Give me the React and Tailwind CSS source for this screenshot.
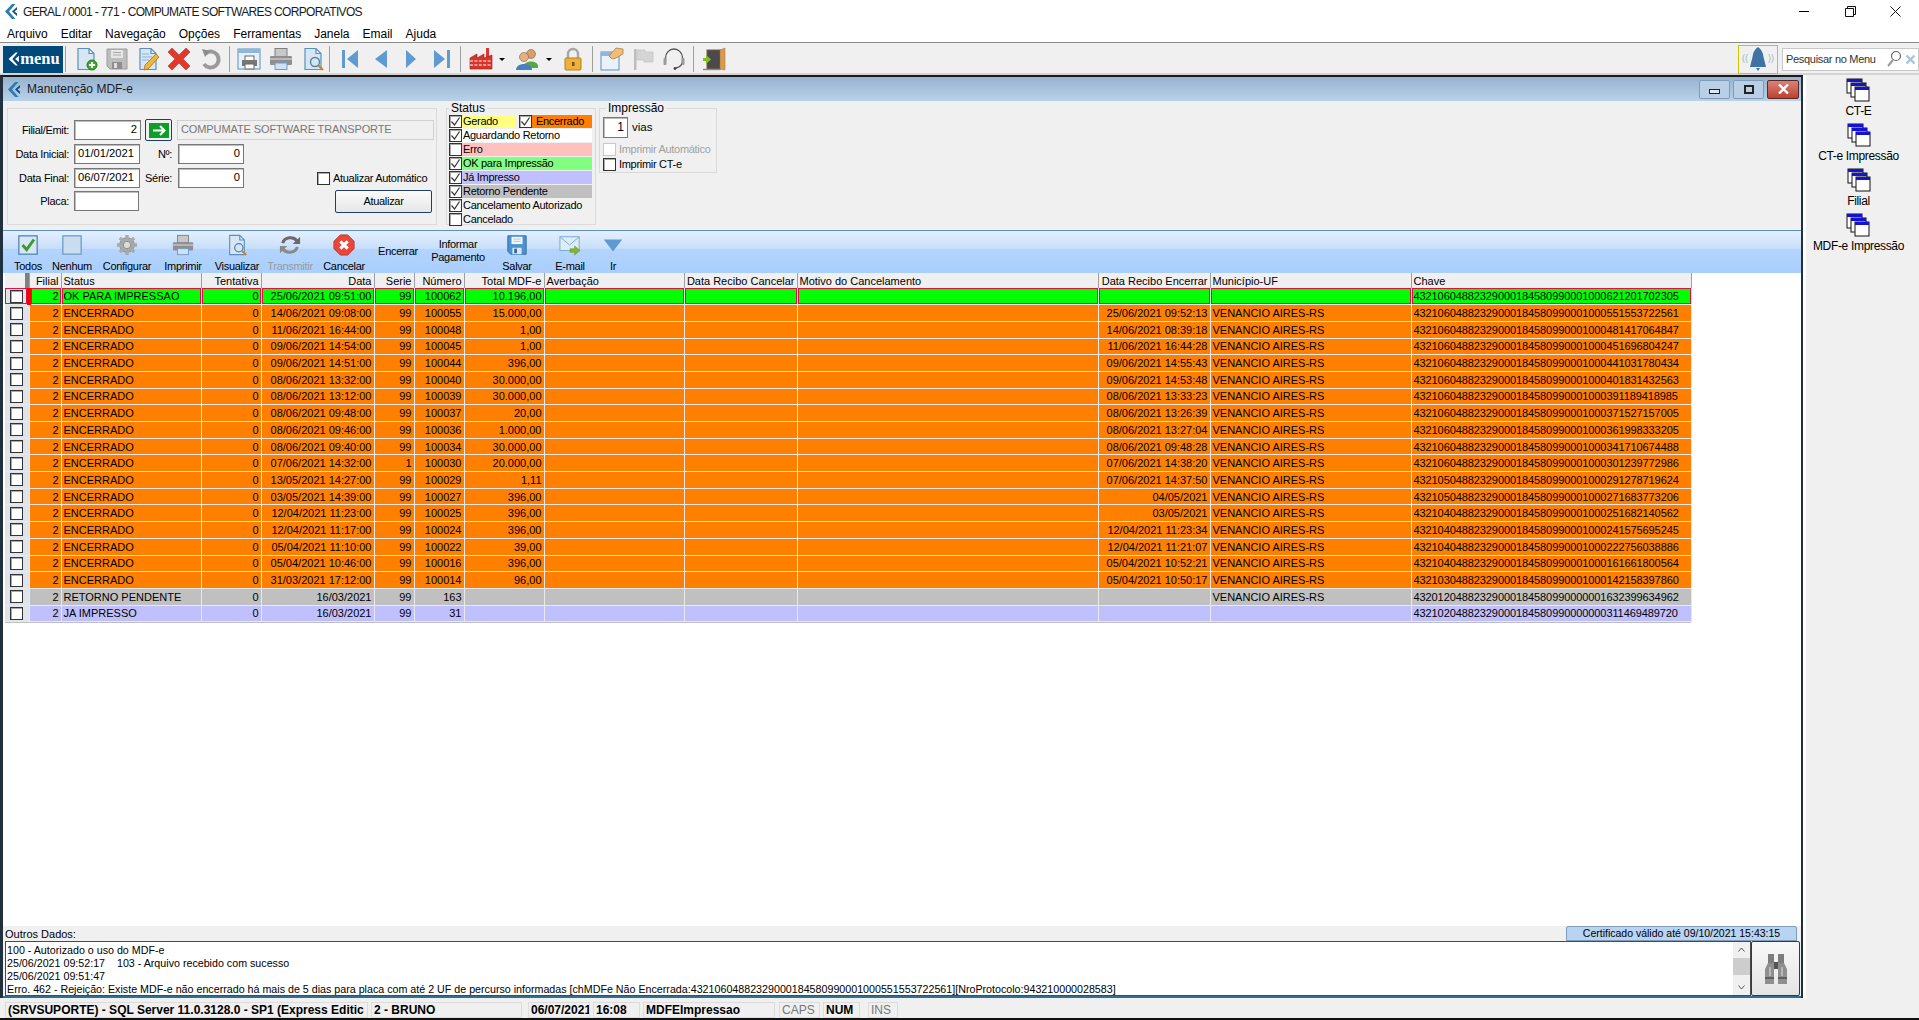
import React from "react";

const menus = ["Arquivo", "Editar", "Navegação", "Opções", "Ferramentas", "Janela", "Email", "Ajuda"];

const PRE = "432106048823290001845809900010";

const rows = [
  { tone: "ok", status: "OK PARA IMPRESSAO", data: "25/06/2021 09:51:00", serie: "99", num: "100062", total: "10.196,00", enc: "", mun: "", chave: "43210604882329000184580990001000621201702305" },
  { status: "ENCERRADO", data: "14/06/2021 09:08:00", serie: "99", num: "100055", total: "15.000,00", enc: "25/06/2021 09:52:13", chave: PRE + "00551553722561" },
  { status: "ENCERRADO", data: "11/06/2021 16:44:00", serie: "99", num: "100048", total: "1,00", enc: "14/06/2021 08:39:18", chave: PRE + "00481417064847" },
  { status: "ENCERRADO", data: "09/06/2021 14:54:00", serie: "99", num: "100045", total: "1,00", enc: "11/06/2021 16:44:28", chave: PRE + "00451696804247" },
  { status: "ENCERRADO", data: "09/06/2021 14:51:00", serie: "99", num: "100044", total: "396,00", enc: "09/06/2021 14:55:43", chave: PRE + "00441031780434" },
  { status: "ENCERRADO", data: "08/06/2021 13:32:00", serie: "99", num: "100040", total: "30.000,00", enc: "09/06/2021 14:53:48", chave: PRE + "00401831432563" },
  { status: "ENCERRADO", data: "08/06/2021 13:12:00", serie: "99", num: "100039", total: "30.000,00", enc: "08/06/2021 13:33:23", chave: PRE + "00391189418985" },
  { status: "ENCERRADO", data: "08/06/2021 09:48:00", serie: "99", num: "100037", total: "20,00", enc: "08/06/2021 13:26:39", chave: PRE + "00371527157005" },
  { status: "ENCERRADO", data: "08/06/2021 09:46:00", serie: "99", num: "100036", total: "1.000,00", enc: "08/06/2021 13:27:04", chave: PRE + "00361998333205" },
  { status: "ENCERRADO", data: "08/06/2021 09:40:00", serie: "99", num: "100034", total: "30.000,00", enc: "08/06/2021 09:48:28", chave: PRE + "00341710674488" },
  { status: "ENCERRADO", data: "07/06/2021 14:32:00", serie: "1", num: "100030", total: "20.000,00", enc: "07/06/2021 14:38:20", chave: PRE + "00301239772986" },
  { status: "ENCERRADO", data: "13/05/2021 14:27:00", serie: "99", num: "100029", total: "1,11", enc: "07/06/2021 14:37:50", chave: "43210504882329000184580990001000291278719624" },
  { status: "ENCERRADO", data: "03/05/2021 14:39:00", serie: "99", num: "100027", total: "396,00", enc: "04/05/2021", chave: "43210504882329000184580990001000271683773206" },
  { status: "ENCERRADO", data: "12/04/2021 11:23:00", serie: "99", num: "100025", total: "396,00", enc: "03/05/2021", chave: "43210404882329000184580990001000251682140562" },
  { status: "ENCERRADO", data: "12/04/2021 11:17:00", serie: "99", num: "100024", total: "396,00", enc: "12/04/2021 11:23:34", chave: "43210404882329000184580990001000241575695245" },
  { status: "ENCERRADO", data: "05/04/2021 11:10:00", serie: "99", num: "100022", total: "39,00", enc: "12/04/2021 11:21:07", chave: "43210404882329000184580990001000222756038886" },
  { status: "ENCERRADO", data: "05/04/2021 10:46:00", serie: "99", num: "100016", total: "396,00", enc: "05/04/2021 10:52:21", chave: "43210404882329000184580990001000161661800564" },
  { status: "ENCERRADO", data: "31/03/2021 17:12:00", serie: "99", num: "100014", total: "96,00", enc: "05/04/2021 10:50:17", chave: "43210304882329000184580990001000142158397860" },
  { tone: "gray", status: "RETORNO PENDENTE", data: "16/03/2021", serie: "99", num: "163", total: "", enc: "", mun: "VENANCIO AIRES-RS", chave: "43201204882329000184580990000001632399634962" },
  { tone: "lilac", status: "JA IMPRESSO", data: "16/03/2021", serie: "99", num: "31", total: "", enc: "", mun: "", chave: "43210204882329000184580990000000311469489720" },
];

const TONES = { ok: "bg-[#00ff00]", gray: "bg-[#c0c0c0]", lilac: "bg-[#c0c0ff]" };

const COLS = [24, 32, 140, 60, 113, 40, 50, 80, 140, 113, 301, 112, 201, 280];

const HEADERS = [
  ["", ""], ["Filial", "r"], ["Status", "l"], ["Tentativa", "r"], ["Data", "r"], ["Serie", "r"], ["Número", "r"],
  ["Total MDF-e", "r"], ["Averbação", "l"], ["Data Recibo Cancelar", "r"], ["Motivo do Cancelamento", "l"],
  ["Data Recibo Encerrar", "r"], ["Município-UF", "l"], ["Chave", "l"],
];

function Svg({ w = 24, h = 24, box = "0 0 24 24", children, className = "" }) {
  return (
    <svg width={w} height={h} viewBox={box} className={`shrink-0 ${className}`}>
      {children}
    </svg>
  );
}

function Chevron({ w = 12, h = 15 }) {
  return (
    <Svg w={w} h={h} box="0 0 12 15">
      <path d="M7 0 L0 7.5 L7 15 H10.5 L4 7.5 L10.5 0 Z" fill="#2a7eb0" />
      <path d="M12 3 L7 7.5 L12 12 V9.5 L9.5 7.5 L12 5.5 Z" fill="#0d4f7c" />
    </Svg>
  );
}

const Page = ({ fill = "#d6e6f5", stroke = "#5b8fc0" }) => (
  <path d="M4 1.5 H15 L20 6.5 V22.5 H4 Z M15 1.5 V6.5 H20" fill={fill} stroke={stroke} strokeWidth="1.2" />
);

const icons = {
  newDoc: (
    <>
      <Page />
      <circle cx="18" cy="18" r="5" fill="#3ea832" stroke="#2a7d22" />
      <path d="M18 15 V21 M15 18 H21" stroke="#fff" strokeWidth="1.8" />
    </>
  ),
  save: (
    <>
      <path d="M2 2 H22 V22 H5 L2 19 Z" fill="#bdbdbd" stroke="#9c9c9c" />
      <rect x="6" y="3" width="12" height="8" fill="#e6e6e6" />
      <path d="M8 5.5 H16 M8 8 H16" stroke="#aaa" />
      <rect x="7" y="15" width="10" height="7" fill="#8e8e8e" />
      <rect x="9" y="16" width="3" height="5" fill="#dedede" />
    </>
  ),
  edit: (
    <>
      <Page />
      <path d="M6 7 H13 M6 10 H16 M6 13 H13" stroke="#8fb3d6" />
      <path d="M20 7 L23 10 L12 22 L8 23 L9 18 Z" fill="#f2b53c" stroke="#a8741a" strokeWidth="0.8" />
    </>
  ),
  del: <path d="M5 1 L12 8 L19 1 L23 5 L16 12 L23 19 L19 23 L12 16 L5 23 L1 19 L8 12 L1 5 Z" fill="#e0392c" stroke="#c4281d" strokeWidth="0.6" />,
  undo: (
    <>
      <path d="M8 6 A8 8 0 1 1 6 17" fill="none" stroke="#9a9a9a" strokeWidth="4" />
      <path d="M4 2 L12 4 L7 10 Z" fill="#8c8c8c" />
    </>
  ),
  preview: (
    <>
      <rect x="1" y="2" width="22" height="20" fill="#e8f1fa" stroke="#5b8fc0" />
      <rect x="1" y="2" width="22" height="4" fill="#8db7dc" />
      <rect x="8" y="9" width="9" height="5" fill="#fff" stroke="#666" />
      <rect x="5" y="13" width="15" height="6" fill="#777" />
      <rect x="8" y="17" width="9" height="5" fill="#fff" stroke="#666" />
    </>
  ),
  print: (
    <>
      <rect x="6" y="1.5" width="12" height="8" fill="#c8c8c8" stroke="#7f7f7f" />
      <rect x="1" y="9" width="22" height="9" rx="1" fill="#8f8f8f" />
      <rect x="1" y="11" width="22" height="2" fill="#b9b9b9" />
      <rect x="6" y="16" width="12" height="6.5" fill="#cfe2f5" stroke="#6f9cc7" />
    </>
  ),
  searchDoc: (
    <>
      <Page />
      <circle cx="14" cy="15" r="4.5" fill="#cfe8f7" stroke="#5f7f99" strokeWidth="1.4" />
      <path d="M17.5 18.5 L22 23" stroke="#b58a3a" strokeWidth="2.2" />
    </>
  ),
  first: (
    <>
      <rect x="4" y="3" width="3" height="18" fill="#5f9bd0" />
      <path d="M20 3 V21 L9 12 Z" fill="#5f9bd0" />
    </>
  ),
  prev: <path d="M18 3 V21 L6 12 Z" fill="#5f9bd0" />,
  next: <path d="M7 3 V21 L17 12 Z" fill="#5f9bd0" />,
  last: (
    <>
      <path d="M4 3 V21 L15 12 Z" fill="#5f9bd0" />
      <rect x="17" y="3" width="3" height="18" fill="#5f9bd0" />
    </>
  ),
  factory: (
    <>
      <rect x="17" y="1" width="3" height="10" fill="#d33" />
      <path d="M1 11 L8 7 V11 L15 7 V11 L23 8 V22 H1 Z" fill="#d8342a" stroke="#9c1d15" strokeWidth="0.6" />
      <path d="M1 14 H23 M1 18 H23" stroke="#fff" strokeWidth="1" strokeDasharray="3 1.4" />
    </>
  ),
  users: (
    <>
      <circle cx="16" cy="7" r="4.5" fill="#d7a06c" stroke="#8a5d34" strokeWidth="0.6" />
      <path d="M9 19 C9 13 23 13 23 19 V21 H9 Z" fill="#58a64a" />
      <circle cx="9" cy="10" r="4.5" fill="#e3b183" stroke="#8a5d34" strokeWidth="0.6" />
      <path d="M1 23 C1 15 17 15 17 23 Z" fill="#4a7fc4" />
    </>
  ),
  lock: (
    <>
      <path d="M7 12 V7 A5 5 0 0 1 17 7 V12" fill="none" stroke="#a7a7a7" strokeWidth="2.4" />
      <rect x="4" y="11" width="16" height="12" rx="1" fill="#eeb13c" stroke="#b67f1c" />
      <rect x="11" y="15" width="2.5" height="4" fill="#7a5210" />
    </>
  ),
  note: (
    <>
      <rect x="1" y="5" width="18" height="18" fill="#eaf2fb" stroke="#5b8fc0" />
      <rect x="1" y="5" width="18" height="4" fill="#8db7dc" />
      <path d="M9 9 L16 1 L23 2 L23 7 L16 11 L12 12 Z" fill="#f0bd7a" stroke="#b0762d" strokeWidth="0.7" />
    </>
  ),
  flag: (
    <>
      <rect x="2" y="2" width="2.5" height="21" fill="#bdbdbd" />
      <path d="M5 3 H13 V5 H21 V15 H12 V13 H5 Z" fill="#d5d5d5" stroke="#bdbdbd" strokeWidth="0.6" />
    </>
  ),
  headset: (
    <>
      <path d="M3.5 14 V11 A8.5 9 0 0 1 20.5 11 V14 C20.5 18 18 20 14 21" fill="none" stroke="#555" strokeWidth="1.3" />
      <rect x="1.5" y="11" width="3" height="7" rx="1" fill="#9a9a9a" />
      <rect x="19.5" y="11" width="3" height="7" rx="1" fill="#9a9a9a" />
      <circle cx="13" cy="21.5" r="1.4" fill="#444" />
    </>
  ),
  door: (
    <>
      <rect x="5" y="3" width="14" height="19" fill="#4a4a4a" stroke="#7b5b32" />
      <path d="M18 3 L23 1 V23 L18 22 Z" fill="#d89a52" stroke="#a76f2f" strokeWidth="0.5" />
      <path d="M1 22.5 H18" stroke="#888" strokeWidth="1.4" />
      <path d="M1 11 H4 V8 L9 12.5 L4 17 V14 H1 Z" fill="#7ec21f" />
    </>
  ),
  check: (
    <>
      <rect x="2" y="2" width="20" height="20" fill="#d7e6f5" stroke="#4f86b8" strokeWidth="1.4" />
      <path d="M6 12 L10.5 17 L18.5 6" fill="none" stroke="#3f9a2a" strokeWidth="3.2" />
    </>
  ),
  blank: <rect x="2" y="2" width="20" height="20" fill="#c9dcf0" stroke="#6f9cc7" strokeWidth="1.4" />,
  gear: (
    <>
      <circle cx="12" cy="12" r="8" fill="#a9a9a9" stroke="#8a8a8a" />
      <path d="M12 1 V23 M1 12 H23 M4.2 4.2 L19.8 19.8 M19.8 4.2 L4.2 19.8" stroke="#a9a9a9" strokeWidth="3.6" />
      <circle cx="12" cy="12" r="4" fill="#dcdcdc" stroke="#8a8a8a" />
    </>
  ),
  sync: (
    <>
      <path d="M4 10 C6 3 16 2 20 8" fill="none" stroke="#6a6a6a" strokeWidth="3.4" />
      <path d="M23 3 V11 H15 Z" fill="#6a6a6a" />
      <path d="M20 14 C18 21 8 22 4 16" fill="none" stroke="#8a8a8a" strokeWidth="3.4" />
      <path d="M1 21 V13 H9 Z" fill="#8a8a8a" />
    </>
  ),
  cancel: (
    <>
      <path d="M8 1 H16 L23 8 V16 L16 23 H8 L1 16 V8 Z" fill="#e8483c" stroke="#c7322a" />
      <path d="M8 8 L16 16 M16 8 L8 16" stroke="#fff" strokeWidth="3.4" />
    </>
  ),
  floppy: (
    <>
      <path d="M2 2 H22 V22 H5 L2 19 Z" fill="#4b93d2" stroke="#2c6ba3" />
      <rect x="6" y="3" width="12" height="8" fill="#f4f8fc" />
      <path d="M8 5.5 H16 M8 8 H16" stroke="#a9c3dc" />
      <rect x="7" y="15" width="10" height="7" fill="#dfe7ee" />
      <rect x="9" y="16" width="3" height="5" fill="#2c6ba3" />
    </>
  ),
  mail: (
    <>
      <rect x="1" y="3" width="21" height="15" fill="#dcecf8" stroke="#79a7cc" />
      <path d="M1 3 L11.5 12 L22 3" fill="none" stroke="#79a7cc" />
      <path d="M12 16 H17 V13 L23 18 L17 23 V20 H12 Z" fill="#83b62c" stroke="#5f8c1c" strokeWidth="0.5" />
    </>
  ),
  down: <path d="M2 6 H22 L12 19 Z" fill="#5f9bd0" />,
  stack: (
    <>
      <rect x="1" y="1" width="15" height="14" fill="#fff" stroke="#111" />
      <rect x="1" y="1" width="15" height="3" fill="#1414d0" />
      <rect x="5" y="5" width="15" height="14" fill="#fff" stroke="#111" />
      <rect x="5" y="5" width="15" height="3" fill="#1414d0" />
      <rect x="9" y="9" width="14" height="14" fill="#fff" stroke="#111" />
      <rect x="9" y="9" width="14" height="3" fill="#1414d0" />
    </>
  ),
};

function Icon({ name, size = 24 }) {
  return <Svg w={size} h={size}>{icons[name]}</Svg>;
}

function Binoculars() {
  return (
    <Svg w={24} h={30} box="0 0 24 30">
      <rect x="4" y="0" width="6" height="9" fill="#7d7d7d" />
      <rect x="14" y="0" width="6" height="9" fill="#7d7d7d" />
      <path d="M4 9 H10 V30 H1 V15 Z M14 9 H20 L23 15 V30 H14 Z" fill="#8f8f8f" />
      <rect x="10" y="8" width="4" height="7" fill="#555" />
      <path d="M1 24 H10 M14 24 H23" stroke="#4f4f4f" strokeWidth="1.4" />
      <path d="M6 13 V22 M18 13 V22" stroke="#c8c8c8" strokeWidth="1.4" />
    </Svg>
  );
}

const Sep = ({ className = "" }) => <div className={`h-[26px] w-px bg-[#a0a0a0] ${className}`} />;

const Caret = ({ className = "" }) => <span className={`h-0 w-0 border-x-[3px] border-t-[3px] border-x-transparent border-t-black ${className}`} />;

const inputCls = "h-full border border-[#777777] shadow-[inset_1px_1px_0_#bdbdbd] bg-white px-[3px] text-[11.2px] leading-[17px] tracking-normal";

function Field({ w, right, children }) {
  return <div className={`${inputCls} ${w} ${right ? "text-right" : ""}`}>{children}</div>;
}

function Check({ on, disabled, className = "" }) {
  return (
    <span className={`flex h-[13px] w-[13px] shrink-0 items-center justify-center border bg-white ${disabled ? "border-[#c8c8c8]" : "border-[#333333] shadow-[inset_1px_1px_0_#aaaaaa]"} ${className}`}>
      {on && (
        <svg width="11" height="11" viewBox="0 0 11 11">
          <path d="M1.5 5.5 L4.5 9 L9.5 1.5" fill="none" stroke="#333" strokeWidth="1.2" />
        </svg>
      )}
    </span>
  );
}

function StatusLine({ on, label, bg = "" }) {
  return (
    <div className="flex h-[14px] items-center">
      <Check on={on} />
      <span className={`h-[13px] min-w-0 flex-1 whitespace-nowrap pl-[1px] text-[11px] leading-[13px] tracking-[-0.3px] ${bg}`}>{label}</span>
    </div>
  );
}

function FilterBox() {
  return (
    <div className="mt-[7px] flex h-[117px] w-[430px] flex-col border border-[#dadada] pl-[1px] text-[11px] tracking-[-0.3px]">
      <div className="mt-[11px] flex h-[20px] items-center">
        <span className="w-[60px] whitespace-nowrap text-right">Filial/Emit:</span>
        <div className="ml-[5px] flex h-full items-center">
          <Field w="w-[67px]" right>2</Field>
          <button className="ml-[4px] flex h-[22px] w-[27px] items-center justify-center rounded-[2px] border border-[#1d3d6e] bg-[#f0f0f0]">
            <span className="flex h-[15px] w-[20px] items-center justify-center bg-[#0f9d2a]">
              <svg width="14" height="11" viewBox="0 0 14 11">
                <path d="M1 5.5 H12 M8 1 L12.5 5.5 L8 10" fill="none" stroke="#fff" strokeWidth="2" />
              </svg>
            </span>
          </button>
          <div className="ml-[5px] h-full w-[257px] border border-[#d0d0d0] bg-[#f0f0f0] px-[3px] text-[11px] leading-[17px] tracking-[-0.1px] text-[#777777]">COMPUMATE SOFTWARE TRANSPORTE</div>
        </div>
      </div>
      <div className="mt-[4px] flex h-[20px] items-center">
        <span className="w-[60px] whitespace-nowrap text-right">Data Inicial:</span>
        <div className="ml-[5px] h-full"><Field w="w-[66px]">01/01/2021</Field></div>
        <span className="w-[32px] text-right">Nº:</span>
        <div className="ml-[6px] h-full"><Field w="w-[66px]" right>0</Field></div>
      </div>
      <div className="mt-[4px] flex h-[20px] items-center">
        <span className="w-[60px] whitespace-nowrap text-right">Data Final:</span>
        <div className="ml-[5px] h-full"><Field w="w-[66px]">06/07/2021</Field></div>
        <span className="w-[32px] text-right">Série:</span>
        <div className="ml-[6px] h-full"><Field w="w-[66px]" right>0</Field></div>
        <Check className="ml-[73px]" />
        <span className="ml-[3px] whitespace-nowrap">Atualizar Automático</span>
      </div>
      <div className="mt-[3px] flex h-[20px] items-center">
        <span className="w-[60px] text-right">Placa:</span>
        <div className="ml-[5px] h-full"><Field w="w-[65px]" /></div>
        <button className="ml-[196px] h-[23px] w-[97px] rounded-[2px] border border-[#1d3d6e] bg-gradient-to-b from-[#fbfbfb] to-[#e6e6e6] text-[11px]">Atualizar</button>
      </div>
    </div>
  );
}

function GroupBox({ title, className, legendClass = "ml-[3px]", children }) {
  return (
    <fieldset className={`min-w-0 border border-[#dadada] ${className}`}>
      <legend className={`px-[2px] text-[12px] leading-[11px] ${legendClass}`}>{title}</legend>
      {children}
    </fieldset>
  );
}

function StatusBox() {
  return (
    <GroupBox title="Status" legendClass="ml-0" className="ml-[9px] mt-[2px] h-[122px] w-[150px] pl-[2px] pr-[3px]">
      <div className="flex h-[14px] items-center">
        <Check on />
        <span className="h-[13px] w-[54px] bg-[#ffff80] pl-[1px] text-[11px] leading-[13px] tracking-[-0.3px]">Gerado</span>
        <Check on className="ml-[3px]" />
        <span className="h-[13px] w-[60px] bg-[#ff8000] pl-[4px] text-[11px] leading-[13px] tracking-[-0.3px]">Encerrado</span>
      </div>
      <StatusLine on label="Aguardando Retorno" bg="bg-white" />
      <StatusLine label="Erro" bg="bg-[#ffc0c0]" />
      <StatusLine on label="OK para Impressão" bg="bg-[#80ff80]" />
      <StatusLine on label="Já Impresso" bg="bg-[#c0c0ff]" />
      <StatusLine on label="Retorno Pendente" bg="bg-[#c0c0c0]" />
      <StatusLine on label="Cancelamento Autorizado" />
      <StatusLine label="Cancelado" />
    </GroupBox>
  );
}

function PrintBox() {
  return (
    <GroupBox title="Impressão" className="ml-[3px] mt-[2px] h-[70px] w-[118px] pl-[3px]">
      <div className="mt-[3px] flex h-[21px] items-center">
        <div className="h-full w-[25px] border border-[#777777] bg-white pr-[3px] text-right text-[12px] leading-[19px] shadow-[inset_1px_1px_0_#bdbdbd]">1</div>
        <span className="ml-[4px] text-[11.5px]">vias</span>
      </div>
      <div className="mt-[5px] flex h-[13px] items-center">
        <Check disabled />
        <span className="ml-[3px] whitespace-nowrap tracking-[-0.3px] text-[#a0a0a0]">Imprimir Automático</span>
      </div>
      <div className="mt-[2px] flex h-[13px] items-center">
        <Check />
        <span className="ml-[3px] whitespace-nowrap tracking-[-0.3px]">Imprimir CT-e</span>
      </div>
    </GroupBox>
  );
}

const actions = [
  { w: "w-[44px]", icon: "check", label: "Todos" },
  { w: "w-[44px]", icon: "blank", label: "Nenhum" },
  { w: "w-[66px]", icon: "gear", label: "Configurar" },
  { w: "w-[46px]", icon: "print", label: "Imprimir" },
  { w: "w-[62px]", icon: "searchDoc", label: "Visualizar" },
  { w: "w-[44px]", icon: "sync", label: "Transmitir", muted: true },
  { w: "w-[64px]", icon: "cancel", label: "Cancelar" },
  { w: "w-[44px]", lines: ["Encerrar"] },
  { w: "w-[76px]", lines: ["Informar", "Pagamento"] },
  { w: "w-[42px]", icon: "floppy", label: "Salvar" },
  { w: "w-[64px]", icon: "mail", label: "E-mail" },
  { w: "w-[22px]", icon: "down", label: "Ir" },
];

function ActionBar() {
  return (
    <div className="flex h-[43px] shrink-0 border-t border-t-[#5b8fd0] bg-[linear-gradient(#e6f0fe_0%,#c6defb_42%,#b3d4fd_43%,#a9cffe_100%)] pl-[3px] text-[11px] tracking-[-0.3px]">
      {actions.map((a) =>
        a.icon ? (
          <div key={a.label} className={`flex flex-col items-center pt-[3px] ${a.w}`}>
            <Icon name={a.icon} size={22} />
            <span className={`mt-[4px] whitespace-nowrap leading-[13px] ${a.muted ? "text-[#9a9a9a]" : ""}`}>{a.label}</span>
          </div>
        ) : (
          <div key={a.w + a.lines[0]} className={`flex flex-col items-center justify-center pb-[2px] leading-[13px] ${a.w}`}>
            {a.lines.map((l) => <span key={l} className="whitespace-nowrap">{l}</span>)}
          </div>
        )
      )}
    </div>
  );
}

function Cell({ right, children, ok }) {
  return (
    <td className={`h-[16.7px] overflow-hidden whitespace-nowrap border-b border-r border-[#e9e9e9] p-0 leading-[14px] ${ok ? "shadow-[inset_0_0_0_1px_#e01040]" : ""} ${right ? "pr-[2px] text-right" : "pl-[2px]"}`}>
      {children}
    </td>
  );
}

function Grid() {
  return (
    <div className="min-h-0 flex-1 overflow-hidden bg-white pl-[2px]">
      <table className="w-[1686px] table-fixed border-collapse text-[11px]">
        <colgroup>
          {COLS.map((c, i) => <col key={i} style={{ width: c }} />)}
        </colgroup>
        <thead>
          <tr className="h-[15px] bg-[#f0f0f0]">
            {HEADERS.map(([t, a], i) => (
              <th key={i} className={`overflow-hidden whitespace-nowrap border-r border-[#9f9f9f] p-0 text-[11px] font-normal leading-[14px] ${a === "r" ? "pr-[2px] text-right" : "pl-[2px] text-left"}`}>
                {i === 0 ? <div className="ml-auto h-[15px] w-[4px] bg-[#808080]" /> : t}
              </th>
            ))}
          </tr>
        </thead>
        <tbody>
          {rows.map((r) => {
            const ok = r.tone === "ok";
            const mun = r.mun !== undefined ? r.mun : "VENANCIO AIRES-RS";
            return (
              <tr key={r.chave} className={TONES[r.tone] || "bg-[#ff8000]"}>
                <td className={`border-b border-r border-[#e9e9e9] bg-[#dfe3ec] p-0 ${ok ? "border-r-4 border-r-[#ff0000] shadow-[inset_0_0_0_1px_#e01040]" : ""}`}>
                  <Check className="ml-[5px]" />
                </td>
                <Cell right ok={ok}>2</Cell>
                <Cell ok={ok}>{r.status}</Cell>
                <Cell right ok={ok}>0</Cell>
                <Cell right ok={ok}>{r.data}</Cell>
                <Cell right ok={ok}>{r.serie}</Cell>
                <Cell right ok={ok}>{r.num}</Cell>
                <Cell right ok={ok}>{r.total}</Cell>
                <Cell ok={ok} />
                <Cell ok={ok} />
                <Cell ok={ok} />
                <Cell right ok={ok}>{r.enc}</Cell>
                <Cell ok={ok}>{mun}</Cell>
                <Cell ok={ok}><span className="tracking-[-0.09px]">{r.chave}</span></Cell>
              </tr>
            );
          })}
          <tr className="h-px bg-[#c0c0c0]"><td colSpan={14} className="h-px p-0" /></tr>
        </tbody>
      </table>
    </div>
  );
}

function LogBox() {
  return (
    <div className="flex h-[57px] shrink-0 border-b-2 border-b-[#2f6f8f] pl-[2px] pr-[1px]">
      <div className="flex min-w-0 flex-1 border border-[#4a4a4a] bg-white">
        <div className="flex-1 overflow-hidden whitespace-nowrap pl-[1px] pt-[2px] text-[10.7px] leading-[13px]">
          <div>100 - Autorizado o uso do MDF-e</div>
          <div>25/06/2021 09:52:17 &nbsp;&nbsp; 103 - Arquivo recebido com sucesso</div>
          <div>25/06/2021 09:51:47</div>
          <div>Erro. 462 - Rejeição: Existe MDF-e não encerrado há mais de 5 dias para placa com até 2 UF de percurso informadas [chMDFe Não Encerrada:43210604882329000184580990001000551553722561][NroProtocolo:943210000028583]</div>
        </div>
        <div className="flex w-[17px] flex-col items-center justify-between bg-[#f0f0f0] py-[5px] text-[#555555]">
          <svg width="7" height="5" viewBox="0 0 7 5"><path d="M0.5 4.5 L3.5 1 L6.5 4.5" fill="none" stroke="#555" /></svg>
          <div className="mb-[4px] h-[17px] w-full bg-[#cdcdcd]" />
          <svg width="7" height="5" viewBox="0 0 7 5"><path d="M0.5 0.5 L3.5 4 L6.5 0.5" fill="none" stroke="#555" /></svg>
        </div>
      </div>
      <div className="flex w-[49px] items-center justify-center rounded-[2px] border border-[#1d3d6e] bg-gradient-to-b from-[#f8f8f8] to-[#e4e4e4]">
        <Binoculars />
      </div>
    </div>
  );
}

function MdfWindow() {
  return (
    <div className="flex w-[1803px] shrink-0 flex-col border-l-[3px] border-r-[2px] border-[#20303f] border-t-2 border-t-[#1a1a1a] bg-[#f0f0f0]">
      <div className="flex h-[24px] shrink-0 items-center bg-gradient-to-b from-[#97b2d0] to-[#b9d2eb] pl-[5px] pr-[2px]">
        <Chevron />
        <span className="ml-[7px] text-[12px] text-[#1a1a1a]">Manutenção MDF-e</span>
        <div className="ml-auto flex items-center gap-[3px]">
          <button className="flex h-[19px] w-[31px] items-center justify-center rounded-[2px] border border-[#7f9cbb] bg-[#b9cfe6]"><span className="mt-[4px] h-[5px] w-[11px] border border-[#222] bg-[#dfe8f2]" /></button>
          <button className="flex h-[19px] w-[31px] items-center justify-center rounded-[2px] border border-[#7f9cbb] bg-[#b9cfe6]"><span className="h-[9px] w-[10px] border-2 border-[#222]" /></button>
          <button className="flex h-[19px] w-[32px] items-center justify-center rounded-[2px] border border-[#5a2a22] bg-gradient-to-b from-[#d5837a] to-[#bf3f2c]">
            <svg width="11" height="10" viewBox="0 0 11 10"><path d="M1 0.5 L10 9.5 M10 0.5 L1 9.5" stroke="#fff" strokeWidth="2.4" /></svg>
          </button>
        </div>
      </div>
      <div className="flex h-[129px] shrink-0 pl-[4px]">
        <FilterBox />
        <StatusBox />
        <PrintBox />
      </div>
      <ActionBar />
      <Grid />
      <div className="flex h-[15px] shrink-0 items-end pl-[2px]">
        <span className="mb-[1px] text-[11px] leading-[12px]">Outros Dados:</span>
        <div className="ml-auto mr-[4px] flex h-[15px] w-[231px] items-center justify-center rounded-t-[2px] border border-[#7f9cbb] bg-[#b9d3f3] text-[10.5px]">Certificado válido até 09/10/2021 15:43:15</div>
      </div>
      <LogBox />
    </div>
  );
}

const shortcuts = ["CT-E", "CT-e Impressão", "Filial", "MDF-e Impressão"];

function SidePanel() {
  return (
    <div className="flex flex-1 flex-col items-center gap-[1px] border-l-[3px] border-l-white bg-[#f0f0f0] pr-[8px] pt-[3px]">
      {shortcuts.map((s) => (
        <div key={s} className="flex h-[44px] flex-col items-center">
          <Icon name="stack" size={24} />
          <span className="mt-[2px] whitespace-nowrap text-[12px] leading-[14px] tracking-[-0.33px]">{s}</span>
        </div>
      ))}
    </div>
  );
}

function Pane({ w, children, bold = true, muted }) {
  return (
    <div className={`flex h-[16px] shrink-0 items-center overflow-hidden whitespace-nowrap border border-[#dcdcdc] px-[2px] text-[12px] ${w} ${bold ? "font-bold" : ""} ${muted ? "text-[#777777]" : ""}`}>
      {children}
    </div>
  );
}

export default function App() {
  return (
    <div className="flex h-[1020px] w-[1919px] flex-col overflow-hidden bg-white font-['Liberation_Sans',sans-serif] text-[11px] text-black">
      <div className="flex h-[25px] shrink-0 items-center pb-[2px] pl-[5px]">
        <Chevron />
        <span className="ml-[6px] whitespace-nowrap text-[12px] tracking-[-0.65px] text-[#1a1a1a]">GERAL / 0001 - 771 - COMPUMATE SOFTWARES CORPORATIVOS</span>
        <div className="ml-auto flex items-center">
          <span className="flex w-[46px] justify-center"><span className="h-px w-[10px] bg-black" /></span>
          <span className="flex w-[46px] justify-center">
            <svg width="11" height="11" viewBox="0 0 11 11"><path d="M0.5 2.5 H8.5 V10.5 H0.5 Z M2.5 2.5 V0.5 H10.5 V8.5 H8.5" fill="none" stroke="#111" /></svg>
          </span>
          <span className="flex w-[46px] justify-center pr-[2px]">
            <svg width="11" height="11" viewBox="0 0 11 11"><path d="M0.5 0.5 L10.5 10.5 M10.5 0.5 L0.5 10.5" stroke="#111" /></svg>
          </span>
        </div>
      </div>
      <div className="flex h-[17px] shrink-0 items-center gap-[13px] pl-[7px] text-[12px]">
        {menus.map((m) => <span key={m}>{m}</span>)}
      </div>
      <div className="flex h-[33px] shrink-0 items-center border-t border-t-[#8a8a8a] bg-[#f0f0f0] pl-[3px] shadow-[inset_0_-2px_0_#d4d4d4]">
        <div className="flex h-[27px] w-[60px] items-center justify-center bg-[#00497a] pl-[2px] font-['Liberation_Serif',serif] text-[16.5px] font-bold text-white">
          <svg width="12" height="14" viewBox="0 0 11 12"><path d="M7 0 L0.5 6 L7 12 L9 12 L4 6 L9 0 Z M10 3 L6.5 6 L10 9 Z" fill="#fff" /></svg>
          <span className="leading-none">menu</span>
        </div>
        <Sep className="ml-[2px]" />
        <div className="ml-[8px] flex gap-[7px]">
          <Icon name="newDoc" />
          <Icon name="save" />
          <Icon name="edit" />
          <Icon name="del" />
          <Icon name="undo" />
        </div>
        <Sep className="ml-[7px]" />
        <div className="ml-[7px] flex gap-[8px]">
          <Icon name="preview" />
          <Icon name="print" />
          <Icon name="searchDoc" />
        </div>
        <Sep className="ml-[4px]" />
        <div className="ml-[8px] flex gap-[6.5px]">
          <Icon name="first" />
          <Icon name="prev" />
          <Icon name="next" />
          <Icon name="last" />
        </div>
        <Sep className="ml-[6.5px]" />
        <div className="ml-[8px]"><Icon name="factory" /></div>
        <Caret className="ml-[6px]" />
        <div className="ml-[10px]"><Icon name="users" /></div>
        <Caret className="ml-[7px]" />
        <div className="ml-[9px]"><Icon name="lock" /></div>
        <Sep className="ml-[7px]" />
        <div className="ml-[7px]"><Icon name="note" /></div>
        <div className="ml-[8px]"><Icon name="flag" /></div>
        <div className="ml-[6px]"><Icon name="headset" /></div>
        <Sep className="ml-[7px]" />
        <div className="ml-[8px]"><Icon name="door" /></div>
        <div className="ml-auto flex items-center">
          <div className="flex h-[29px] w-[40px] items-center justify-center gap-0 border border-[#c8c800] text-[9px] text-[#99bbbb]">
            <span>((</span>
            <svg width="20" height="26" viewBox="0 0 20 26" className="shrink-0"><path d="M10 1 C13 3 15 6 15.5 11 L18 21 H2 L4.5 11 C5 6 7 3 10 1 Z" fill="#3d74a4" /><path d="M8 22 H12 L10 25 Z" fill="#3d74a4" /></svg>
            <span>))</span>
          </div>
          <div className="ml-[4px] flex h-[23px] w-[137px] items-center border border-[#c8c8c8] bg-white pl-[3px] text-[11px] tracking-[-0.3px] text-[#333333]">
            <span className="whitespace-nowrap">Pesquisar no Menu</span>
            <svg width="16" height="18" viewBox="0 0 16 18" className="ml-[10px] shrink-0"><circle cx="10" cy="6" r="4.5" fill="none" stroke="#666" strokeWidth="1.2" /><path d="M7 10 L2 16" stroke="#999" strokeWidth="2" /></svg>
            <svg width="11" height="11" viewBox="0 0 11 11" className="ml-[3px] shrink-0"><path d="M1.5 1.5 L9.5 9.5 M9.5 1.5 L1.5 9.5" stroke="#a8c4dc" strokeWidth="2.4" /></svg>
          </div>
        </div>
      </div>
      <div className="flex min-h-0 flex-1">
        <MdfWindow />
        <SidePanel />
      </div>
      <div className="flex h-[4px] shrink-0 bg-[#f0f0f0]" />
      <div className="flex h-[16px] shrink-0 items-center gap-[3px] bg-[#f0f0f0] pl-[5px]">
        <Pane w="w-[363px]">(SRVSUPORTE) - SQL Server 11.0.3128.0 - SP1 (Express Editic</Pane>
        <Pane w="w-[151px]">2 - BRUNO</Pane>
        <Pane w="w-[62px] ml-[3px]">06/07/2021</Pane>
        <Pane w="w-[47px]">16:08</Pane>
        <Pane w="w-[132px]">MDFEImpressao</Pane>
        <Pane w="w-[41px] ml-[1px]" bold={false} muted>CAPS</Pane>
        <Pane w="w-[37px]">NUM</Pane>
        <Pane w="w-[30px] ml-[5px]" bold={false} muted>INS</Pane>
      </div>
      <div className="h-[2px] shrink-0 bg-[#111111]" />
    </div>
  );
}
